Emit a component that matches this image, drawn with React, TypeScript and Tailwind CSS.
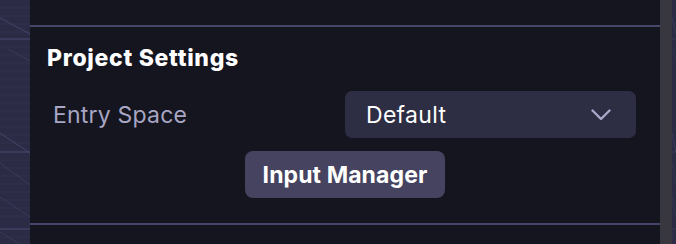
import React from 'react';

const Backdrop: React.FC<{ className?: string }> = ({ className }) => (
  <svg className={className} viewBox="0 0 30 244" preserveAspectRatio="none">
    <rect width="30" height="244" fill="#2b2b45" />
    {[8, 16, 24, 32, 47, 55, 63, 71, 79, 87, 95, 103, 111, 119, 127, 135, 143, 160, 168, 176, 184, 192, 200, 208, 216, 237].map((y) => (
      <line key={y} x1="0" x2="30" y1={y} y2={y} stroke="#33334f" strokeWidth="1" />
    ))}
    {[39, 152, 229].map((y) => (
      <line key={y} x1="0" x2="30" y1={y} y2={y} stroke="#4a4a70" strokeWidth="1" />
    ))}
    <line x1="0" y1="18" x2="30" y2="34" stroke="#44446a" strokeWidth="1" />
    <line x1="8" y1="49" x2="30" y2="61" stroke="#3a3a5c" strokeWidth="1" />
    <line x1="0" y1="133" x2="30" y2="153" stroke="#44446a" strokeWidth="1" />
    <line x1="0" y1="163" x2="30" y2="185" stroke="#3a3a5c" strokeWidth="1" />
    <line x1="0" y1="197" x2="30" y2="217" stroke="#3a3a5c" strokeWidth="1" />
    <line x1="0" y1="232" x2="20" y2="244" stroke="#3a3a5c" strokeWidth="1" />
  </svg>
);

const Chevron = () => (
  <svg width="20" height="12" viewBox="0 0 20 12" fill="none">
    <polyline points="1.5,1.5 10,10 18.5,1.5" stroke="#a9a8c8" strokeWidth="2.4" strokeLinecap="round" strokeLinejoin="round" />
  </svg>
);

export default function App() {
  return (
    <div
      className="flex h-[244px] w-[676px] overflow-hidden bg-[#2b2b45]"
      style={{ fontFamily: 'Inter, "Noto Sans", sans-serif' }}
    >
      <Backdrop className="h-full w-[30px] shrink-0" />
      <div className="flex w-[630px] shrink-0 flex-col bg-[#15151f]">
        <div className="h-[25px] shrink-0" />
        <div className="h-[2px] shrink-0 bg-[#46456a]" />
        <div className="flex h-[196px] shrink-0 flex-col pt-[17px]">
          <h2 className="pl-[17px] text-[23px] font-extrabold leading-[28px] tracking-[0.7px] text-white">Project Settings</h2>
          <div className="mt-[19px] flex items-center pl-[23px] pr-[24px]">
            <span className="text-[23px] leading-[28px] tracking-[0.2px] text-[#a7a6c4]">Entry Space</span>
            <button className="ml-auto flex h-[47px] w-[291px] items-center justify-between rounded-[7px] bg-[#2d2d43] pl-[21px] pr-[25px]">
              <span className="text-[23px] leading-[28px] tracking-[0.3px] text-white">Default</span>
              <Chevron />
            </button>
          </div>
          <div className="mt-[13px] flex justify-center">
            <button className="flex h-[47px] w-[200px] items-center justify-center rounded-[8px] bg-[#45435f] text-[23px] font-bold leading-[28px] tracking-[0.1px] text-white">
              Input Manager
            </button>
          </div>
        </div>
        <div className="h-[2px] shrink-0 bg-[#46456a]" />
      </div>
      <div className="h-full w-[12px] shrink-0 bg-[#38363f]" />
      <Backdrop className="h-full w-[4px] shrink-0" />
    </div>
  );
}
